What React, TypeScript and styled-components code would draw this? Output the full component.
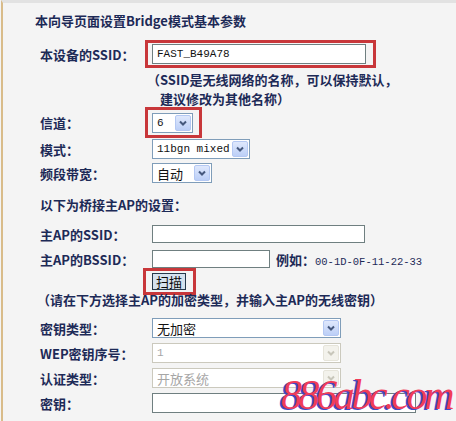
import React from "react";
import styled, { createGlobalStyle } from "styled-components";

const CJK = `"Noto Sans CJK SC", "Noto Sans", sans-serif`;
const MONO = `"Liberation Mono", "DejaVu Sans Mono", monospace`;

const Global = createGlobalStyle`
  html, body { margin: 0; padding: 0; background: #f4f4f4; }
  body { width: 456px; height: 421px; overflow: hidden; }
`;

const Page = styled.div`
  position: relative;
  box-sizing: border-box;
  width: 455px;
  height: 421px;
  margin-left: 1px;
  border-left: 2px solid #d9bc8a;
  border-top: 3px solid #e2e2e2;
  background: #f4f4f4;
  font-family: ${CJK};
  font-size: 13px;
  color: #1d2a57;
  overflow: hidden;
`;

const Form = styled.div`
  display: flex;
  flex-direction: column;
  padding-left: 32px;
`;

const Title = styled.div`
  height: 20px;
  margin-top: 8px;
  line-height: 20px;
  font-weight: bold;
  white-space: nowrap;
`;

const Row = styled.div<{ $h: number; $mt: number }>`
  display: flex;
  align-items: center;
  height: ${(p) => p.$h}px;
  margin-top: ${(p) => p.$mt}px;
  padding-left: 5px;
  white-space: nowrap;
`;

const Label = styled.div`
  width: 112px;
  flex-shrink: 0;
  font-weight: bold;
`;

const Highlight = styled.div<{ $ml: number; $pad: string }>`
  display: flex;
  margin-left: ${(p) => p.$ml}px;
  border: 3px solid #c8373a;
  padding: ${(p) => p.$pad};
`;

const TextBox = styled.div<{ $w: number; $h: number }>`
  box-sizing: border-box;
  width: ${(p) => p.$w}px;
  height: ${(p) => p.$h}px;
  display: flex;
  align-items: center;
  padding-left: 4px;
  background: #ffffff;
  border: 1px solid #6f7f80;
  font-family: ${MONO};
  font-size: 11px;
  color: #111;
`;

const Hint = styled.div`
  margin-top: 2px;
  margin-left: 112px;
  line-height: 19px;
  font-weight: bold;
  white-space: nowrap;
`;

const HintLine = styled.div<{ $indent: number }>`
  padding-left: ${(p) => p.$indent}px;
`;

const Section = styled.div<{ $mt: number; $pl: number }>`
  height: 20px;
  line-height: 20px;
  margin-top: ${(p) => p.$mt}px;
  padding-left: ${(p) => p.$pl}px;
  font-weight: bold;
  white-space: nowrap;
`;

const SelectBox = styled.div<{ $w: number; $off?: boolean }>`
  box-sizing: border-box;
  width: ${(p) => p.$w}px;
  height: 20px;
  display: flex;
  align-items: center;
  justify-content: space-between;
  padding: 0 1px 0 4px;
  background: #ffffff;
  border: 1px solid ${(p) => (p.$off ? "#cbc9bd" : "#7f9db9")};
  color: ${(p) => (p.$off ? "#a6a6a6" : "#111111")};
  font-size: 13px;
`;

const SelectText = styled.span<{ $mono?: boolean }>`
  font-family: ${(p) => (p.$mono ? MONO : CJK)};
  font-size: ${(p) => (p.$mono ? "11px" : "13px")};
`;

const ArrowBtn = styled.div<{ $off?: boolean }>`
  box-sizing: border-box;
  width: 16px;
  height: 16px;
  display: flex;
  align-items: center;
  justify-content: center;
  border: 1px solid ${(p) => (p.$off ? "#e6e4da" : "#b4c8f3")};
  border-radius: 2px;
  background: ${(p) =>
    p.$off ? "#f3f2ec" : "linear-gradient(#dfe8fc, #bccff7)"};
`;

const Example = styled.span`
  margin-left: 6px;
  font-weight: bold;
`;

const ExampleMono = styled.span`
  font-family: ${MONO};
  font-size: 10.5px;
  font-weight: normal;
`;

const ScanButton = styled.div`
  box-sizing: border-box;
  width: 34px;
  height: 17px;
  display: flex;
  align-items: center;
  justify-content: center;
  background: #d5e2ee;
  border: 1px solid #263a4c;
  color: #0b0b0b;
  font-size: 13px;
`;

const Watermark = styled.div`
  position: absolute;
  left: 278px;
  top: 372px;
  padding-right: 4px;
  font-family: "Liberation Serif", "DejaVu Serif", serif;
  font-style: italic;
  font-size: 42px;
  line-height: 40px;
  letter-spacing: -3.4px;
  color: #f03c5a;
  text-shadow: -2px 1px 0 #3f47c9;
  white-space: nowrap;
  pointer-events: none;
`;

const Chevron = ({ off }: { off?: boolean }) => (
  <svg width="10" height="10" viewBox="0 0 10 10">
    <path
      d="M2 3.5 L5 6.5 L8 3.5"
      fill="none"
      stroke={off ? "#c8c6ba" : "#45587d"}
      strokeWidth="2"
    />
  </svg>
);

const Select = ({
  w,
  text,
  off,
  mono,
}: {
  w: number;
  text: string;
  off?: boolean;
  mono?: boolean;
}) => (
  <SelectBox $w={w} $off={off}>
    <SelectText $mono={mono}>{text}</SelectText>
    <ArrowBtn $off={off}>
      <Chevron off={off} />
    </ArrowBtn>
  </SelectBox>
);

export default function App() {
  return (
    <>
      <Global />
      <Page>
        <Form>
          <Title>本向导页面设置Bridge模式基本参数</Title>

          <Row $h={28} $mt={9}>
            <Label>本设备的SSID：</Label>
            <Highlight $ml={-7} $pad="1px 7px 1px 4px">
              <TextBox $w={214} $h={20}>FAST_B49A78</TextBox>
            </Highlight>
          </Row>

          <Hint>
            <HintLine $indent={0}>（SSID是无线网络的名称，可以保持默认，</HintLine>
            <HintLine $indent={13}>建议修改为其他名称）</HintLine>
          </Hint>

          <Row $h={31} $mt={-1}>
            <Label>信道：</Label>
            <Highlight $ml={-7} $pad="3px 6px 2px 4px">
              <Select w={41} text="6" mono />
            </Highlight>
          </Row>

          <Row $h={20} $mt={1}>
            <Label>模式：</Label>
            <Select w={98} text="11bgn mixed" mono />
          </Row>

          <Row $h={20} $mt={4}>
            <Label>频段带宽：</Label>
            <Select w={60} text="自动" />
          </Row>

          <Section $mt={12} $pl={5}>以下为桥接主AP的设置：</Section>

          <Row $h={18} $mt={10}>
            <Label>主AP的SSID：</Label>
            <TextBox $w={213} $h={18} />
          </Row>

          <Row $h={18} $mt={7}>
            <Label>主AP的BSSID：</Label>
            <TextBox $w={118} $h={18} />
            <Example>
              例如：<ExampleMono>00-1D-0F-11-22-33</ExampleMono>
            </Example>
          </Row>

          <Row $h={27} $mt={0}>
            <Label />
            <Highlight $ml={-9} $pad="2px 7px 2px 6px">
              <ScanButton>扫描</ScanButton>
            </Highlight>
          </Row>

          <Section $mt={-5} $pl={2}>
            （请在下方选择主AP的加密类型，并输入主AP的无线密钥）
          </Section>

          <Row $h={20} $mt={8}>
            <Label>密钥类型：</Label>
            <Select w={189} text="无加密" />
          </Row>

          <Row $h={20} $mt={5}>
            <Label>WEP密钥序号：</Label>
            <Select w={189} text="1" off mono />
          </Row>

          <Row $h={20} $mt={5}>
            <Label>认证类型：</Label>
            <Select w={189} text="开放系统" off />
          </Row>

          <Row $h={20} $mt={5}>
            <Label>密钥：</Label>
            <TextBox $w={264} $h={20} />
          </Row>
        </Form>
        <Watermark>886abc.com</Watermark>
      </Page>
    </>
  );
}
